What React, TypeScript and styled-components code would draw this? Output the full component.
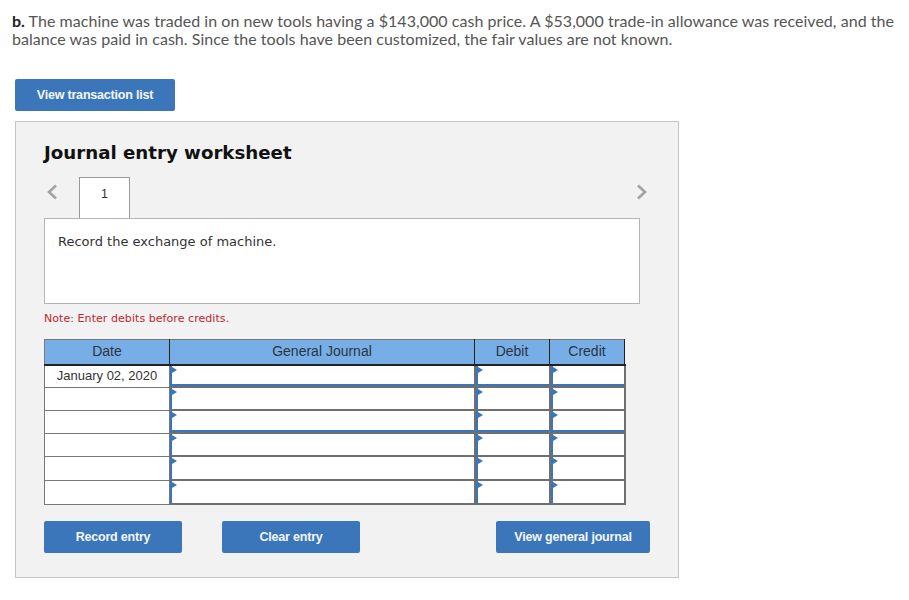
import React from 'react';
import styled, { createGlobalStyle } from 'styled-components';

const GlobalStyle = createGlobalStyle`
  html, body {
    margin: 0;
    padding: 0;
    background: #fff;
  }
`;

const Page = styled.div`
  width: 909px;
  height: 600px;
  overflow: hidden;
  padding: 12px 0 0 12px;
  box-sizing: border-box;
`;

const Question = styled.p`
  margin: 0;
  width: 890px;
  font-family: 'Lato', sans-serif;
  font-size: 16px;
  letter-spacing: 0.04px;
  line-height: 18px;
  color: #555;

  b {
    color: #222;
  }
`;

const Button = styled.button<{ $width: number }>`
  width: ${(p) => p.$width}px;
  height: 32px;
  padding: 0;
  border: none;
  border-radius: 2px;
  background: #3b76ba;
  color: #f4f7fb;
  font-family: 'Liberation Sans', Arial, sans-serif;
  font-size: 12.5px;
  font-weight: 700;
  letter-spacing: -0.2px;
`;

const TopButton = styled(Button)`
  display: block;
  margin: 31px 0 10px 3px;
`;

const Panel = styled.section`
  width: 664px;
  height: 457px;
  box-sizing: border-box;
  margin-left: 3px;
  padding: 19px 28px 0;
  background: #f2f2f2;
  border: 1px solid #c4c4c4;
`;

const Title = styled.h2`
  margin: 0;
  font-family: 'DejaVu Sans', Verdana, sans-serif;
  font-size: 18.2px;
  line-height: 24px;
  font-weight: 700;
  color: #111;
`;

const TabRow = styled.div`
  display: flex;
  align-items: flex-start;
  width: 604px;
  height: 41px;
  margin-top: 12px;
`;

const Chevron = styled.svg<{ $push?: boolean }>`
  width: 12px;
  height: 16px;
  margin-top: 7px;
  margin-left: ${(p) => (p.$push ? 'auto' : '2px')};
  fill: none;
  stroke: #a3a3a3;
  stroke-width: 2.6;
`;

const Tab = styled.div`
  width: 51px;
  height: 41px;
  box-sizing: border-box;
  margin-left: 21px;
  padding-top: 9px;
  background: #fff;
  border: 1px solid #9a9a9a;
  border-bottom: none;
  text-align: center;
  font-family: 'Liberation Sans', Arial, sans-serif;
  font-size: 12.5px;
  line-height: 14px;
  color: #333;
  position: relative;
  z-index: 1;
`;

const PromptBox = styled.div`
  width: 596px;
  height: 86px;
  box-sizing: border-box;
  padding: 15px 13px;
  background: #fff;
  border: 1px solid #b5b5b5;
  font-family: 'DejaVu Sans', Verdana, sans-serif;
  font-size: 13px;
  line-height: 16px;
  color: #333;
`;

const Note = styled.p`
  margin: 8px 0 13px;
  font-family: 'DejaVu Sans', Verdana, sans-serif;
  font-size: 11px;
  letter-spacing: 0.06px;
  line-height: 14px;
  color: #c0272d;
`;

const Sheet = styled.table`
  width: 581px;
  table-layout: fixed;
  border-collapse: collapse;
  font-family: 'Liberation Sans', Arial, sans-serif;
  font-size: 13px;
  color: #333;
`;

const HeadCell = styled.th`
  height: 22px;
  padding: 0 0 2px;
  background: #78aee6;
  border-top: 1px solid #777;
  border-left: 1px solid #222;
  border-right: 1px solid #222;
  border-bottom: 2px solid #222;
  font-weight: 400;
  font-size: 14px;
  color: #2b3440;
  &:first-child {
    border-left-color: #777;
  }
`;

const DateCell = styled.td`
  padding: 0 0 2px;
  background: #fff;
  border: 1px solid #777;
  text-align: center;
  white-space: nowrap;
`;

const EntryCell = styled.td`
  padding: 0;
  background: #fff;
  border: 1px solid #6f6f6f;
  border-right-width: 2px;
  border-bottom-width: 2px;
`;

const EntryBox = styled.div<{ $height: number; $thick: boolean }>`
  height: ${(p) => p.$height}px;
  box-sizing: border-box;
  position: relative;
  border-left: 2px solid #3b76ba;
  border-bottom: ${(p) => (p.$thick ? '2px solid #3b76ba' : 'none')};

  &::before {
    content: '';
    position: absolute;
    left: 0;
    top: 1px;
    border-left: 5px solid #3b76ba;
    border-top: 3.5px solid transparent;
    border-bottom: 3.5px solid transparent;
  }
`;

const Actions = styled.div`
  display: flex;
  justify-content: flex-start;
  width: 606px;
  margin-top: 16px;
`;

const ActionButton = styled(Button)<{ $gap: number }>`
  margin-left: ${(p) => p.$gap}px;
`;

const rows = [
  { date: 'January 02, 2020', height: 20, thick: true },
  { date: '', height: 21, thick: false },
  { date: '', height: 21, thick: true },
  { date: '', height: 21, thick: false },
  { date: '', height: 22, thick: false },
  { date: '', height: 22, thick: false },
];

export default function App() {
  return (
    <Page>
      <GlobalStyle />
      <Question>
        <b>b.</b> The machine was traded in on new tools having a $143,000 cash price. A $53,000 trade-in allowance was
        received, and the balance was paid in cash. Since the tools have been customized, the fair values are not known.
      </Question>
      <TopButton $width={160}>View transaction list</TopButton>
      <Panel>
        <Title>Journal entry worksheet</Title>
        <TabRow>
          <Chevron viewBox="0 0 12 16">
            <path d="M10 1.5 3 8l7 6.5" />
          </Chevron>
          <Tab>1</Tab>
          <Chevron viewBox="0 0 12 16" $push>
            <path d="M2 1.5 9 8l-7 6.5" />
          </Chevron>
        </TabRow>
        <PromptBox>Record the exchange of machine.</PromptBox>
        <Note>Note: Enter debits before credits.</Note>
        <Sheet>
          <colgroup>
            <col width={125} />
            <col width={305} />
            <col width={75} />
            <col width={75} />
          </colgroup>
          <thead>
            <tr>
              <HeadCell>Date</HeadCell>
              <HeadCell>General Journal</HeadCell>
              <HeadCell>Debit</HeadCell>
              <HeadCell>Credit</HeadCell>
            </tr>
          </thead>
          <tbody>
            {rows.map((row, i) => (
              <tr key={i}>
                <DateCell>{row.date}</DateCell>
                {[0, 1, 2].map((c) => (
                  <EntryCell key={c}>
                    <EntryBox $height={row.height} $thick={row.thick} />
                  </EntryCell>
                ))}
              </tr>
            ))}
          </tbody>
        </Sheet>
        <Actions>
          <Button $width={138}>Record entry</Button>
          <ActionButton $width={138} $gap={40}>Clear entry</ActionButton>
          <ActionButton $width={154} $gap={136}>View general journal</ActionButton>
        </Actions>
      </Panel>
    </Page>
  );
}
